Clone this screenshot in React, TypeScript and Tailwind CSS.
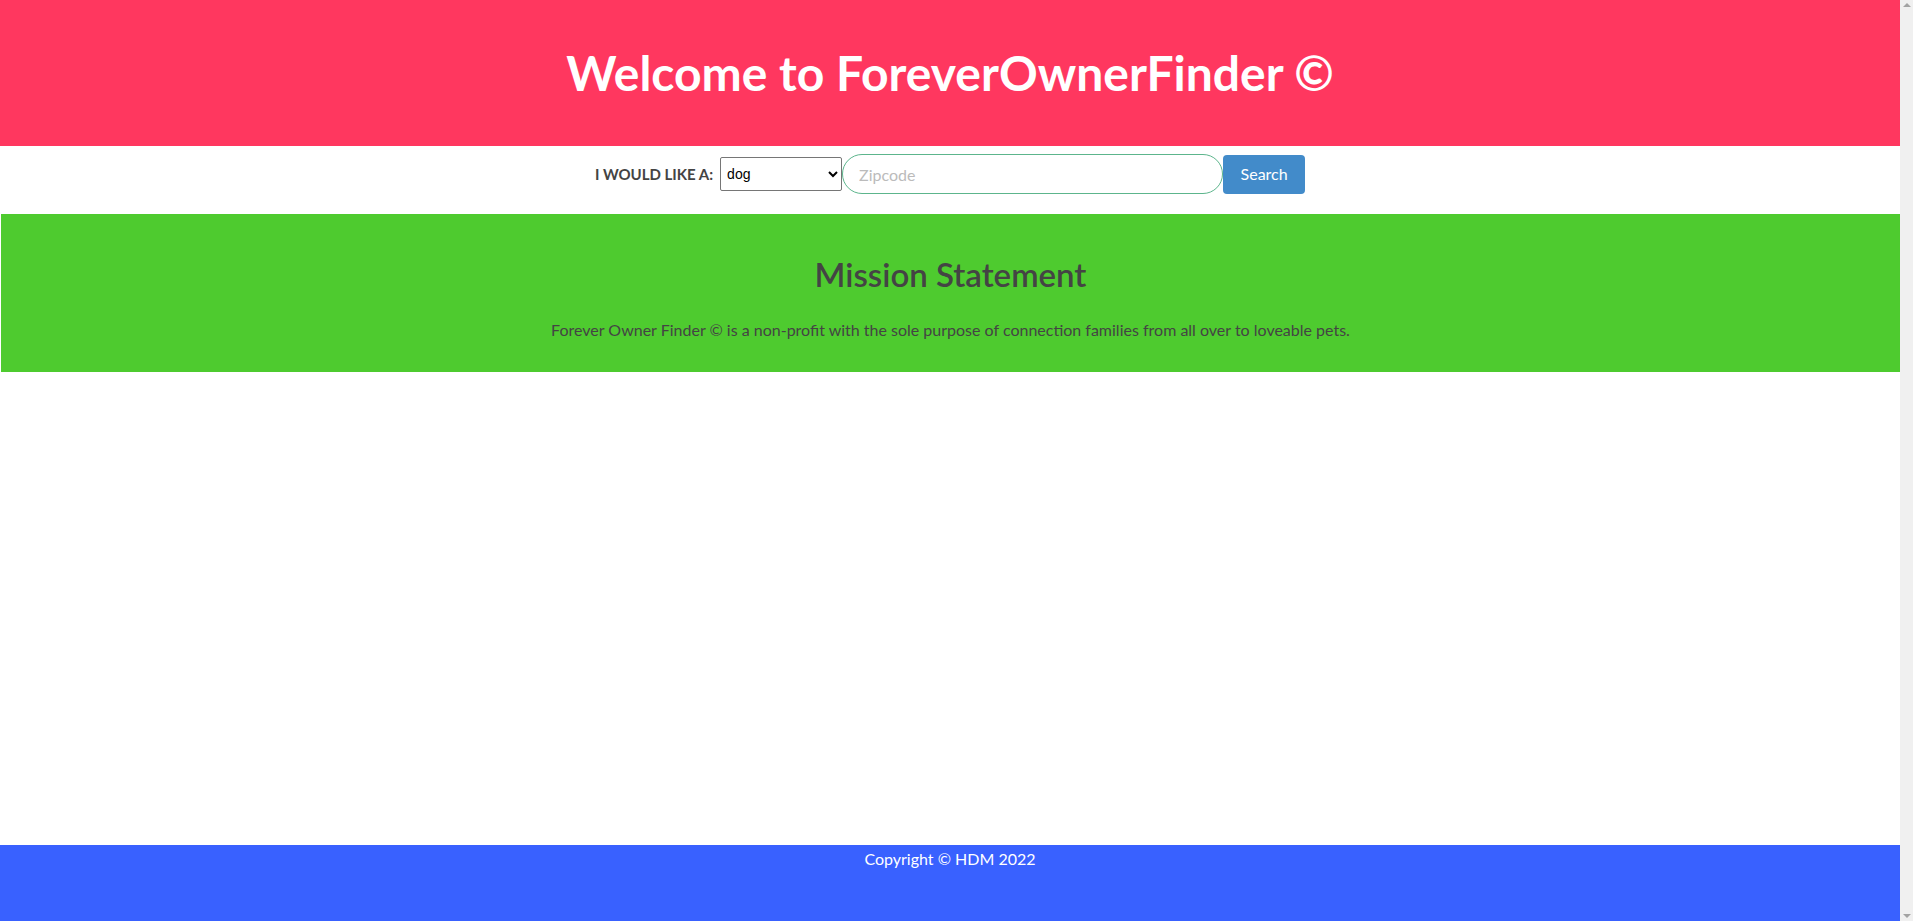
import { useState } from "react";

// Simple landing page: header, search bar, mission, footer
export default function App() {
    const [animal, setAnimal] = useState("dog");
    const [zip, setZip] = useState("");

    return (
        <div
            className="flex h-screen overflow-hidden bg-white"
            style={{ fontFamily: "Lato, 'Noto Sans', sans-serif" }}
        >
            <div className="flex-1 overflow-hidden">
                {/* Header */}
                <header className="flex h-[146px] items-center justify-center bg-[#ff375f]">
                    <h1 className="text-[48px] font-bold leading-none text-white">
                        Welcome to ForeverOwnerFinder ©
                    </h1>
                </header>

                {/* Search */}
                <div className="flex h-[68px] items-center justify-center pb-[12px]">
                    <label className="mr-[7px] text-[15px] font-bold uppercase text-[#444]">
                        I would like a:
                    </label>
                    <select
                        value={animal}
                        onChange={(e) => setAnimal(e.target.value)}
                        className="h-[34px] w-[122px] rounded-[2px] border border-[#767676] bg-white px-[2px] text-[14px] text-black"
                        style={{ fontFamily: "Arial, 'Liberation Sans', sans-serif" }}
                    >
                        <option value="dog">dog</option>
                        <option value="cat">cat</option>
                    </select>
                    <input
                        value={zip}
                        onChange={(e) => setZip(e.target.value)}
                        placeholder="Zipcode"
                        className="h-[40px] w-[381px] rounded-full border border-[#5cb58c] px-[16px] text-[16px] outline-none placeholder:text-[#bbbbbb]"
                    />
                    <button className="h-[39px] w-[82px] rounded-[4px] bg-[#428bca] text-[16px] text-white">
                        Search
                    </button>
                </div>

                {/* Mission */}
                <section className="ml-px flex h-[158px] flex-col items-center bg-[#4ecb2f] pt-[40px] text-center">
                    <h2 className="text-[33px] font-semibold leading-[40px] text-[#444]">
                        Mission Statement
                    </h2>
                    <p className="mt-[24px] text-[16px] text-[#444]">
                        Forever Owner Finder © is a non-profit with the sole purpose of connection families from all over to loveable pets.
                    </p>
                </section>

                <main className="h-[473px]" />

                {/* Footer */}
                <footer className="h-[140px] bg-[#3961ff] pt-[2px] text-center text-[16px] text-white">
                    Copyright © HDM 2022
                </footer>
            </div>

            {/* Scrollbar track */}
            <div className="flex w-[13px] flex-col items-center justify-between bg-[#f0f0f0] py-[3px]">
                <div className="h-0 w-0 border-x-[4px] border-b-[4px] border-x-transparent border-b-[#a3a3a3]" />
                <div className="h-0 w-0 border-x-[4px] border-t-[4px] border-x-transparent border-t-[#a3a3a3]" />
            </div>
        </div>
    );
}
